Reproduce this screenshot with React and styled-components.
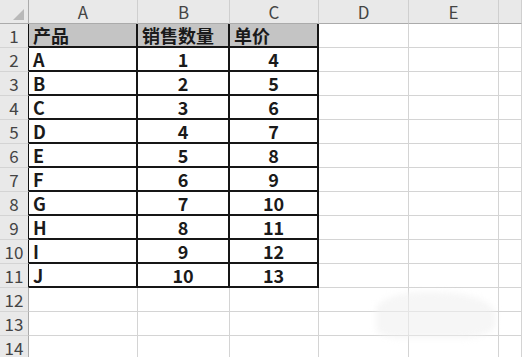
import React from "react";
import styled, { createGlobalStyle } from "styled-components";

const GlobalStyle = createGlobalStyle`
  html, body {
    margin: 0;
    padding: 0;
    background: #ffffff;
    overflow: hidden;
  }
  body {
    font-family: "Noto Sans CJK SC", "Liberation Sans", sans-serif;
  }
`;

const columns = ["A", "B", "C", "D", "E", ""];
const data = [
  ["产品", "销售数量", "单价"],
  ["A", "1", "4"],
  ["B", "2", "5"],
  ["C", "3", "6"],
  ["D", "4", "7"],
  ["E", "5", "8"],
  ["F", "6", "9"],
  ["G", "7", "10"],
  ["H", "8", "11"],
  ["I", "9", "12"],
  ["J", "10", "13"],
];
const totalRows = 14;

export default function App() {
  const rows = [];
  for (let r = 1; r <= totalRows; r++) {
    const values = data[r - 1];
    const inTable = !!values;
    rows.push(
      <RowHead key={`h${r}`} $edge={inTable}>
        {r}
      </RowHead>
    );
    for (let c = 0; c < columns.length; c++) {
      const isTableCell = inTable && c < 3;
      const header = r === 1 && isTableCell;
      rows.push(
        <Cell
          key={`${r}-${c}`}
          $edge={isTableCell}
          $header={header}
          $align={c === 0 || header ? "flex-start" : "center"}
        >
          {isTableCell ? values[c] : ""}
        </Cell>
      );
    }
  }

  return (
    <>
      <GlobalStyle />
      <Sheet>
        <Corner>
          <Triangle />
        </Corner>
        {columns.map((col, i) => (
          <ColHead key={i}>{col}</ColHead>
        ))}
        {rows}
      </Sheet>
      <Smudge />
    </>
  );
}

const Sheet = styled.div`
  display: grid;
  grid-template-columns: 29px 109px 92px 89px 90px 90px 1fr;
  grid-auto-rows: 24px;
  width: 522px;
  height: 357px;
  overflow: hidden;
`;

const Corner = styled.div`
  position: relative;
  background: #e9e9e9;
  border-right: 1px solid #ababab;
  border-bottom: 1px solid #ababab;
  box-sizing: border-box;
`;

const Triangle = styled.div`
  position: absolute;
  right: 4px;
  bottom: 3px;
  width: 0;
  height: 0;
  border-left: 11px solid transparent;
  border-bottom: 11px solid #b9b9b9;
`;

const ColHead = styled.div`
  display: flex;
  align-items: center;
  justify-content: center;
  background: #e9e9e9;
  color: #444444;
  font-size: 17px;
  line-height: 20px;
  border-right: 1px solid #cfcfcf;
  border-bottom: 1px solid #ababab;
  box-sizing: border-box;
`;

const RowHead = styled.div`
  display: flex;
  align-items: flex-end;
  justify-content: center;
  background: #e9e9e9;
  color: #444444;
  font-size: 17px;
  line-height: 22px;
  border-bottom: 1px solid #d4d4d4;
  border-right: 1px solid ${(p) => (p.$edge ? "#111111" : "#ababab")};
  box-sizing: border-box;
`;

const Cell = styled.div`
  display: flex;
  align-items: flex-end;
  justify-content: ${(p) => p.$align};
  padding: 0 4px 0 4px;
  box-sizing: border-box;
  font-size: 18px;
  line-height: 22px;
  font-weight: bold;
  color: #1a1a1a;
  white-space: nowrap;
  background: ${(p) => (p.$header ? "#c4c4c4" : "#ffffff")};
  border-right: ${(p) => (p.$edge ? "2px solid #161616" : "1px solid #d4d4d4")};
  border-bottom: ${(p) => (p.$edge ? "2px solid #161616" : "1px solid #d4d4d4")};
`;

const Smudge = styled.div`
  position: absolute;
  left: 376px;
  top: 292px;
  width: 120px;
  height: 46px;
  background: rgba(240, 240, 240, 0.6);
  border-radius: 40% 50% 30% 20%;
  filter: blur(3px);
  pointer-events: none;
`;
